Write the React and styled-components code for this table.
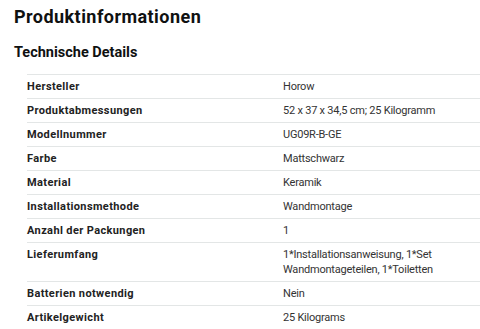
import React from 'react'
import styled, { createGlobalStyle } from 'styled-components'

const GlobalStyle = createGlobalStyle`
  body {
    margin: 0;
    background: #ffffff;
    font-family: Roboto, "Liberation Sans", sans-serif;
    color: #0f1111;
  }
`

const Page = styled.div`
  padding: 6px 0 0 14px;
  width: 480px;
  box-sizing: border-box;
`
const Title = styled.h1`
  margin: 0;
  font-size: 18px;
  line-height: 22px;
  font-weight: 700;
  letter-spacing: 0.45px;
  color: #0f1111;
`
const SubTitle = styled.h2`
  margin: 16px 0 0;
  font-size: 14.5px;
  line-height: 18px;
  font-weight: 700;
  color: #0f1111;
`
const Table = styled.table`
  margin: 12px 0 0 13px;
  width: 453px;
  border-collapse: collapse;
  font-size: 11px;
  line-height: 15px;
`
const Row = styled.tr`
  border-top: 1px solid #e3e6e6;
`
const Label = styled.th`
  width: 256px;
  padding: 4px 0;
  text-align: left;
  vertical-align: top;
  font-weight: 700;
  letter-spacing: 0.38px;
  color: #222222;
`
const Value = styled.td`
  padding: 4px 0;
  vertical-align: top;
  letter-spacing: -0.22px;
  color: #333333;
`

const details = [
  ['Hersteller', 'Horow'],
  ['Produktabmessungen', '52 x 37 x 34,5 cm; 25 Kilogramm'],
  ['Modellnummer', 'UG09R-B-GE'],
  ['Farbe', 'Mattschwarz'],
  ['Material', 'Keramik'],
  ['Installationsmethode', 'Wandmontage'],
  ['Anzahl der Packungen', '1'],
  ['Lieferumfang', <>1*Installationsanweisung, 1*Set<br />Wandmontageteilen, 1*Toiletten</>],
  ['Batterien notwendig', 'Nein'],
  ['Artikelgewicht', '25 Kilograms'],
]

export default function App() {
  return (
    <Page>
      <GlobalStyle />
      <Title>Produktinformationen</Title>
      <SubTitle>Technische Details</SubTitle>
      <Table>
        <tbody>
          {details.map(([label, value]) => (
            <Row key={label}>
              <Label>{label}</Label>
              <Value>{value}</Value>
            </Row>
          ))}
          <Row><td colSpan={2} /></Row>
        </tbody>
      </Table>
    </Page>
  )
}
